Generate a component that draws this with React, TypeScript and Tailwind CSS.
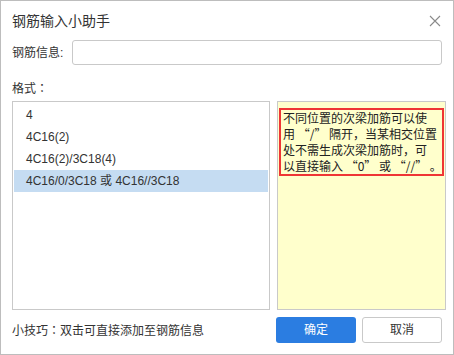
import { useState } from "react";

const FORMATS = ["4", "4C16(2)", "4C16(2)/3C18(4)", "4C16/0/3C18 或 4C16//3C18"];

const CJK = { fontFamily: '"Noto Sans CJK SC", "Liberation Sans", sans-serif' };
const CENTERED = { fontFamily: '"Noto Sans CJK TC", "Noto Sans CJK SC", sans-serif' };

export default function App() {
  const [selected, setSelected] = useState(3);
  const [value, setValue] = useState("");

  return (
    <div
      className="flex h-[355px] w-[454px] flex-col border border-[#bdbdbd] bg-white px-[11px] text-[12px] text-[#333]"
      style={{ fontFamily: '"Liberation Sans", "Noto Sans CJK SC", sans-serif' }}
    >
      {/* Header */}
      <div className="flex h-[39px] shrink-0 items-center justify-between">
        <span className="text-[14px] leading-none">钢筋输入小助手</span>
        <button aria-label="close" className="mr-[1px] flex h-[12px] w-[12px] items-center justify-center">
          <svg width="12" height="12" viewBox="0 0 12 12" fill="none" stroke="#8a8a8a" strokeWidth="1.1">
            <path d="M1 1 L11 11 M11 1 L1 11" />
          </svg>
        </button>
      </div>

      {/* Info input */}
      <div className="flex h-[25px] shrink-0 items-center">
        <span className="w-[60px] shrink-0">钢筋信息:</span>
        <input
          value={value}
          onChange={(e) => setValue(e.target.value)}
          className="h-[25px] flex-1 rounded-[3px] border border-[#c9c9c9] px-2 text-[12px] outline-none"
        />
      </div>

      <div className="mt-[15px] mb-[5px] h-[16px] shrink-0 leading-[16px]" style={CJK}>
        格式<span style={CENTERED}>：</span>
      </div>

      {/* Lists */}
      <div className="flex h-[209px] shrink-0 gap-[7px]">
        <ul className="w-[258px] shrink-0 border border-[#c9c9c9] p-[1px] pt-[2px]">
          {FORMATS.map((f, i) => (
            <li
              key={f}
              onClick={() => setSelected(i)}
              className={`flex h-[22px] cursor-default items-center pl-[12px] text-[12px] ${
                selected === i ? "bg-[#c5dcf2]" : ""
              }`}
            >
              {f}
            </li>
          ))}
        </ul>
        <div className="flex-1 border border-[#c9c9c9] bg-[#ffffcc] pt-[6px] pl-[1px] pr-[1px]">
          <div
            className="whitespace-nowrap border-2 border-[#ef3535] pl-[2px] text-[12px] leading-[16px] text-[#222]"
            style={CJK}
          >
            不同位置的次梁加筋可以使
            <br />
            用 “/” 隔开，当某相交位置
            <br />
            处不需生成次梁加筋时，可
            <br />
            以直接输入 “0” 或 “//” 。
          </div>
        </div>
      </div>

      {/* Footer */}
      <div className="mt-[7px] flex h-[26px] shrink-0 items-center justify-between">
        <span style={CJK}>
          小技巧<span style={CENTERED}>：</span>双击可直接添加至钢筋信息
        </span>
        <div className="flex gap-[6px]">
          <button className="h-[26px] w-[80px] rounded-[3px] bg-[#2b7de1] text-[12px] text-white">确定</button>
          <button className="h-[26px] w-[80px] rounded-[3px] border border-[#c9c9c9] bg-white text-[12px] text-[#333]">
            取消
          </button>
        </div>
      </div>
    </div>
  );
}
